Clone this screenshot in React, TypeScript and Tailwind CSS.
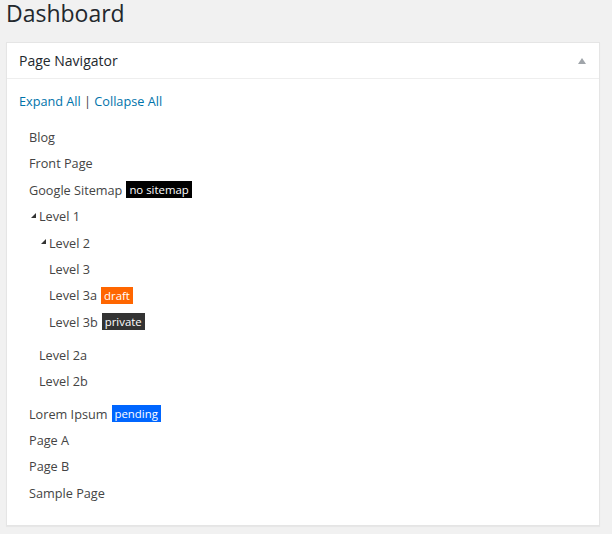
type PageNode = {
  label: string;
  badge?: { text: string; className: string };
  children?: PageNode[];
};

const pages: PageNode[] = [
  { label: 'Blog' },
  { label: 'Front Page' },
  { label: 'Google Sitemap', badge: { text: 'no sitemap', className: 'bg-black' } },
  {
    label: 'Level 1',
    children: [
      {
        label: 'Level 2',
        children: [
          { label: 'Level 3' },
          { label: 'Level 3a', badge: { text: 'draft', className: 'bg-[#ff6600]' } },
          { label: 'Level 3b', badge: { text: 'private', className: 'bg-[#333333]' } },
        ],
      },
      { label: 'Level 2a' },
      { label: 'Level 2b' },
    ],
  },
  { label: 'Lorem Ipsum', badge: { text: 'pending', className: 'bg-[#0066ff]' } },
  { label: 'Page A' },
  { label: 'Page B' },
  { label: 'Sample Page' },
];

const Toggle = () => (
  <span className="mb-[2px] flex w-[10px] shrink-0 items-center pl-[2px]">
    <svg width="5" height="5" viewBox="0 0 5 5">
      <polygon points="5,0 5,5 0,5" fill="#333" />
    </svg>
  </span>
);

const Item = ({ node }: { node: PageNode }) => {
  return (
    <li className="pb-[6.4px]">
      <div className="flex h-[20px] items-center leading-[20px]">
        {node.children && <Toggle />}
        <span className="cursor-pointer">{node.label}</span>
        {node.badge && (
          <span
            className={`ml-[4px] h-[17px] px-[3px] text-[11.4px] leading-[17px] text-white ${node.badge.className}`}
          >
            {node.badge.text}
          </span>
        )}
      </div>
      {node.children && (
        <ul className="pt-[6.4px] pl-[10px]">
          {node.children.map((child) => (
            <Item key={child.label} node={child} />
          ))}
        </ul>
      )}
    </li>
  );
};

const App = () => {
  return (
    <div className="min-h-[534px] w-full bg-[#f1f1f1] pl-[6px] font-['Open_Sans',sans-serif] text-[12.7px] text-[#444]">
      <h1 className="text-[23px] leading-[27px] font-normal text-[#23282d]">Dashboard</h1>
      <div className="mt-[15px] w-[594px] border border-[#e5e5e5] bg-white shadow-[0_1px_1px_rgba(0,0,0,0.04)]">
        <div className="flex h-[36px] items-center justify-between border-b border-[#eeeeee] pl-[12px] pr-[13px]">
          <h2 className="text-[14px] leading-[20px] text-[#23282d]">Page Navigator</h2>
          <svg width="8" height="6" viewBox="0 0 8 6">
            <polygon points="4,0 8,6 0,6" fill="#a0a5aa" />
          </svg>
        </div>
        <div className="px-[12px] pt-[12px] pb-[16px]">
          <p className="leading-[20px]">
            <a className="cursor-pointer text-[#0073aa]">Expand All</a> |{' '}
            <a className="cursor-pointer text-[#0073aa]">Collapse All</a>
          </p>
          <ul className="mt-[16px] pl-[10px]">
            {pages.map((node) => (
              <Item key={node.label} node={node} />
            ))}
          </ul>
        </div>
      </div>
    </div>
  );
};

export default App;
